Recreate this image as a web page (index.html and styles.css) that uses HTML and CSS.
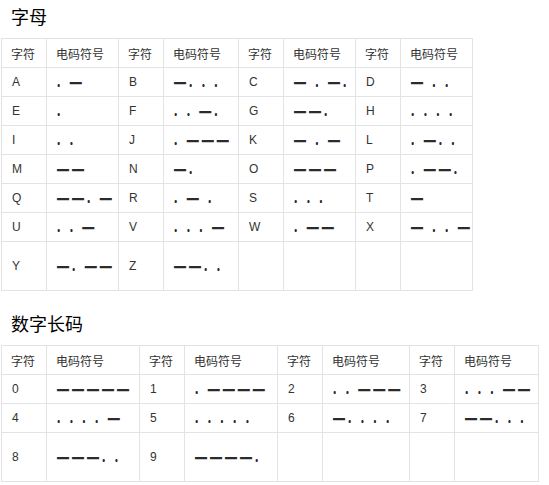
FILE: index.html
```html
<!DOCTYPE html>
<html lang="zh">
<head>
<meta charset="utf-8">
<title>摩尔斯电码</title>
<link rel="stylesheet" href="styles.css">
</head>
<body>
<section class="block">
  <h2 class="title">字母</h2>
  <div class="grid letters">
    <div class="c h">字符</div><div class="c h">电码符号</div><div class="c h">字符</div><div class="c h">电码符号</div><div class="c h">字符</div><div class="c h">电码符号</div><div class="c h">字符</div><div class="c h">电码符号</div>
    <div class="c k">A</div><div class="c m">. —</div><div class="c k">B</div><div class="c m">—. . .</div><div class="c k">C</div><div class="c m">— . —.</div><div class="c k">D</div><div class="c m">— . .</div>
    <div class="c k">E</div><div class="c m">.</div><div class="c k">F</div><div class="c m">. . —.</div><div class="c k">G</div><div class="c m">——.</div><div class="c k">H</div><div class="c m">. . . .</div>
    <div class="c k">I</div><div class="c m">. .</div><div class="c k">J</div><div class="c m">. ———</div><div class="c k">K</div><div class="c m">— . —</div><div class="c k">L</div><div class="c m">. —. .</div>
    <div class="c k">M</div><div class="c m">——</div><div class="c k">N</div><div class="c m">—.</div><div class="c k">O</div><div class="c m">———</div><div class="c k">P</div><div class="c m">. ——.</div>
    <div class="c k">Q</div><div class="c m">——. —</div><div class="c k">R</div><div class="c m">. — .</div><div class="c k">S</div><div class="c m">. . .</div><div class="c k">T</div><div class="c m">—</div>
    <div class="c k">U</div><div class="c m">. . —</div><div class="c k">V</div><div class="c m">. . . —</div><div class="c k">W</div><div class="c m">. ——</div><div class="c k">X</div><div class="c m">— . . —</div>
    <div class="c k">Y</div><div class="c m">—. ——</div><div class="c k">Z</div><div class="c m">——. .</div><div class="c"></div><div class="c"></div><div class="c"></div><div class="c"></div>
  </div>
</section>
<section class="block second">
  <h2 class="title">数字长码</h2>
  <div class="grid digits">
    <div class="c h">字符</div><div class="c h">电码符号</div><div class="c h">字符</div><div class="c h">电码符号</div><div class="c h">字符</div><div class="c h">电码符号</div><div class="c h">字符</div><div class="c h">电码符号</div>
    <div class="c k">0</div><div class="c m">—————</div><div class="c k">1</div><div class="c m">. ————</div><div class="c k">2</div><div class="c m">. . ———</div><div class="c k">3</div><div class="c m">. . . ——</div>
    <div class="c k">4</div><div class="c m">. . . . —</div><div class="c k">5</div><div class="c m">. . . . .</div><div class="c k">6</div><div class="c m">—. . . .</div><div class="c k">7</div><div class="c m">——. . .</div>
    <div class="c k">8</div><div class="c m">———. .</div><div class="c k">9</div><div class="c m">————.</div><div class="c"></div><div class="c"></div><div class="c"></div><div class="c"></div>
  </div>
</section>
</body>
</html>
```
FILE: styles.css
```css
html, body {
  margin: 0;
  padding: 0;
  background: #fff;
}
body {
  padding: 4px 0 0 1px;
  font-family: "Liberation Sans", "Noto Sans CJK SC", sans-serif;
  color: #333;
}
.block.second {
  margin-top: 20px;
}
.title {
  margin: 0 0 10px;
  padding-left: 10px;
  font-family: "Noto Sans CJK SC", sans-serif;
  font-size: 18px;
  line-height: 24px;
  font-weight: normal;
  color: #000;
}
.grid {
  display: inline-grid;
  gap: 1px;
  padding: 1px;
  background: #e3e3e3;
}
.letters {
  grid-template-columns: 44px 71px 44px 74px 44px 71px 44px 71px;
  grid-template-rows: repeat(7, 28px) 48px;
}
.digits {
  grid-template-columns: 44px 92px 44px 92px 44px 86px 44px 83px;
  grid-template-rows: repeat(3, 28px) 48px;
}
.c {
  background: #fff;
  display: flex;
  align-items: center;
  padding-left: 10px;
  font-size: 12px;
  white-space: nowrap;
  overflow: hidden;
}
.h {
  padding-left: 9px;
  font-family: "Noto Sans CJK SC", sans-serif;
  font-size: 12px;
}
.k {
  font-family: "Liberation Sans", sans-serif;
}
.m {
  padding-left: 10px;
  font-family: "Liberation Sans", sans-serif;
  font-weight: bold;
  letter-spacing: 3px;
  color: #2b2b2b;
  text-shadow: 0 1px 0 #2b2b2b;
}
```
